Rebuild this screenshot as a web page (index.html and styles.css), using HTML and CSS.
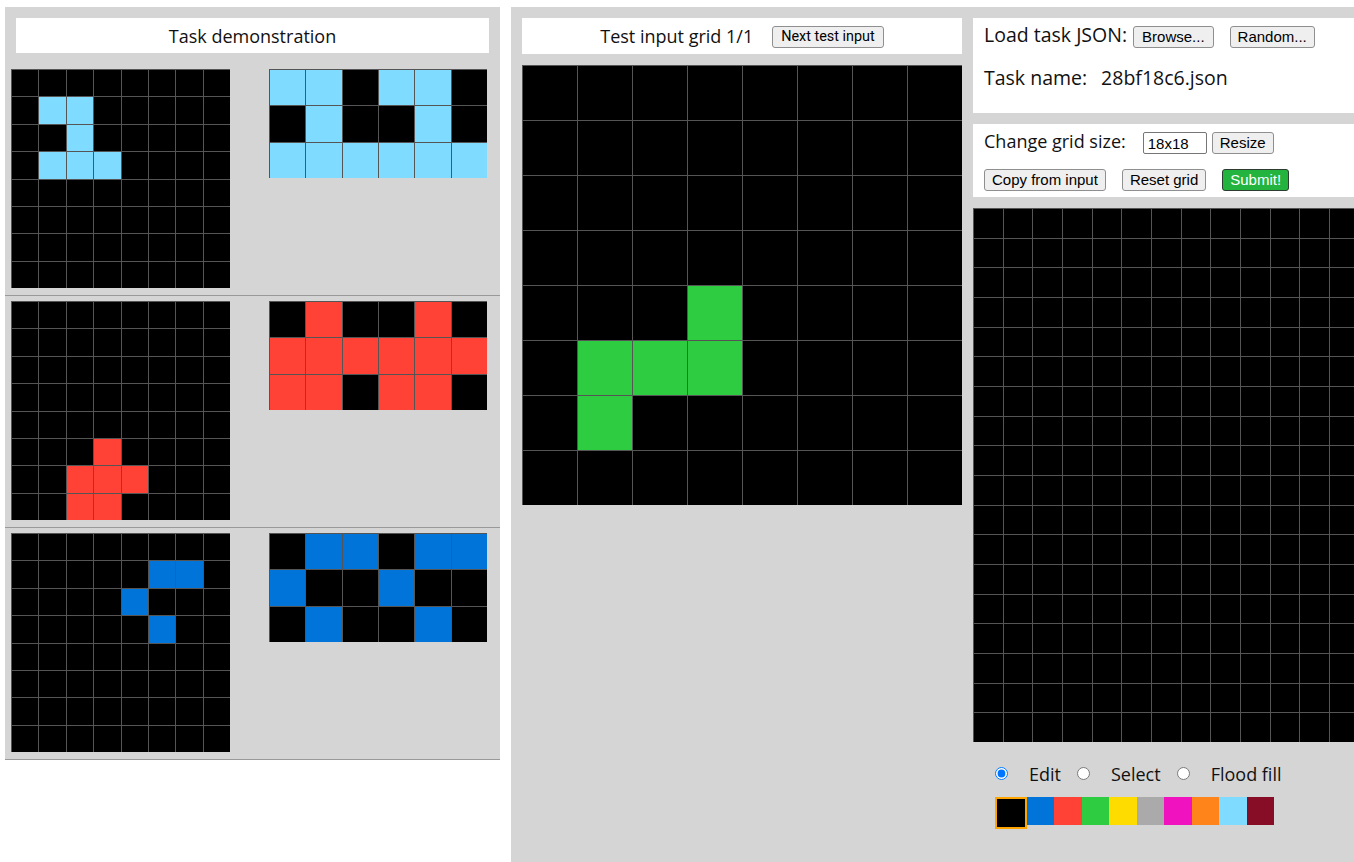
FILE: index.html
```html
<!DOCTYPE html>
<html lang="en">
<head>
<meta charset="utf-8">
<title>ARC testing interface</title>
<link rel="stylesheet" href="styles.css">
</head>
<body>
<div class="workspace">
  <section class="demo-panel">
    <div class="title-box demo-title">Task demonstration</div>
    <div class="pair">
      <div class="grid grid-in" data-grid="d1in" data-size="219"></div>
      <div class="grid grid-out" data-grid="d1out" data-size="218"></div>
    </div>
    <div class="pair">
      <div class="grid grid-in" data-grid="d2in" data-size="219"></div>
      <div class="grid grid-out" data-grid="d2out" data-size="218"></div>
    </div>
    <div class="pair">
      <div class="grid grid-in" data-grid="d3in" data-size="219"></div>
      <div class="grid grid-out" data-grid="d3out" data-size="218"></div>
    </div>
  </section>

  <section class="work-panel">
    <div class="test-col">
      <div class="title-box test-title"><span>Test input grid 1/1</span><button class="btn btn-next">Next test input</button></div>
      <div class="grid" data-grid="test" data-size="440"></div>
    </div>

    <div class="editor-col">
      <div class="box box-load">
        <div class="row">
          <span class="label label-big">Load task JSON:</span>
          <button class="btn btn-browse">Browse...</button>
          <button class="btn btn-random">Random...</button>
        </div>
        <div class="row row-name">
          <span class="label label-big">Task name:</span>
          <span class="label label-big task-name">28bf18c6.json</span>
        </div>
      </div>

      <div class="box box-resize">
        <div class="row">
          <span class="label label-small">Change grid size:</span>
          <input class="size-input" type="text" value="18x18">
          <button class="btn btn-resize">Resize</button>
        </div>
        <div class="row row-actions">
          <button class="btn">Copy from input</button>
          <button class="btn btn-gap">Reset grid</button>
          <button class="btn btn-gap btn-submit">Submit!</button>
        </div>
      </div>

      <div class="grid" data-grid="out" data-size="534"></div>

      <div class="toolbar">
        <div class="tools">
          <input type="radio" id="tool_edit" name="tool" class="radio" checked>
          <label for="tool_edit" class="tool-label">Edit</label>
          <input type="radio" id="tool_select" name="tool" class="radio radio-next">
          <label for="tool_select" class="tool-label">Select</label>
          <input type="radio" id="tool_fill" name="tool" class="radio radio-next">
          <label for="tool_fill" class="tool-label">Flood fill</label>
        </div>
        <div class="palette">
          <div class="swatch c0 selected"></div>
          <div class="swatch c1"></div>
          <div class="swatch c2"></div>
          <div class="swatch c3"></div>
          <div class="swatch c4"></div>
          <div class="swatch c5"></div>
          <div class="swatch c6"></div>
          <div class="swatch c7"></div>
          <div class="swatch c8"></div>
          <div class="swatch c9"></div>
        </div>
      </div>
    </div>
  </section>
</div>
<script src="script.js"></script>
</body>
</html>
```

FILE: styles.css
```css
html, body {
  margin: 0;
  padding: 0;
  overflow: hidden;
  background: #ffffff;
}

body {
  font-family: "Open Sans", "Noto Sans", sans-serif;
  font-size: 18px;
  color: #111111;
}

.workspace {
  display: flex;
  align-items: flex-start;
  padding: 7px 0 0 5px;
  width: max-content;
}

/* ---------- left: demonstration ---------- */
.demo-panel {
  flex-shrink: 0;
  width: 495px;
  background: #d5d5d5;
  padding-top: 11px;
}

.title-box {
  background: #ffffff;
  display: flex;
  align-items: center;
  justify-content: center;
}

.demo-title {
  height: 35px;
  margin: 0 11px 11px;
}

.pair {
  display: flex;
  align-items: flex-start;
  gap: 39px;
  padding: 5px 0 7px 6px;
  border-bottom: 1px solid #999999;
}

/* ---------- grids ---------- */
.grid {
  display: grid;
  flex-shrink: 0;
  background: #000000;
}

.cell {
  box-sizing: border-box;
  border-top: 1px solid #555555;
  border-left: 1px solid #555555;
}

.c0 { background: #000000; }
.c1 { background: #0074d9; }
.c2 { background: #ff4136; }
.c3 { background: #2ecc40; }
.c4 { background: #ffdc00; }
.c5 { background: #aaaaaa; }
.c6 { background: #f012be; }
.c7 { background: #ff851b; }
.c8 { background: #7fdbff; }
.c9 { background: #870c25; }

/* ---------- right: work area ---------- */
.work-panel {
  flex-shrink: 0;
  display: flex;
  align-items: flex-start;
  gap: 11px;
  margin-left: 11px;
  padding: 11px;
  min-height: 880px;
  box-sizing: border-box;
  background: #d5d5d5;
}

.test-col {
  width: 440px;
  flex-shrink: 0;
}

.test-title {
  height: 36px;
  margin-bottom: 11px;
}

.editor-col {
  width: 560px;
  flex-shrink: 0;
}

.box {
  background: #ffffff;
  padding: 8px 11px 0;
  margin-bottom: 11px;
}

.box-load {
  padding-bottom: 22px;
}

.box-resize {
  padding-bottom: 6px;
}

.row {
  display: flex;
  align-items: flex-start;
  height: 22px;
}

.label {
  white-space: nowrap;
}

.label-big {
  font-size: 19.5px;
  line-height: 26px;
  margin-top: -4px;
}

.label-small {
  line-height: 24px;
  margin-top: -3px;
}

.row-name {
  margin-top: 21px;
}

.task-name {
  margin-left: 14px;
}

.row-actions {
  margin-top: 15px;
}

/* ---------- buttons & inputs ---------- */
.btn {
  font-family: "Liberation Sans", Arial, sans-serif;
  font-size: 15px;
  line-height: 18px;
  color: #000000;
  background: #efefef;
  border: 1px solid #8f8f8f;
  border-radius: 3px;
  padding: 1px 7px;
  margin: 0;
  height: 22px;
  box-sizing: border-box;
  white-space: nowrap;
}

.btn-next {
  font-family: Roboto, "Liberation Sans", sans-serif;
  font-size: 14.4px;
  padding: 1px 8px;
  margin: 2px 0 0 19px;
}

.btn-browse {
  margin-left: 6px;
  padding: 1px 8px;
}

.btn-random {
  margin-left: 16px;
  padding: 1px 7px;
}

.btn-resize {
  margin-left: 5px;
}

.btn-gap {
  margin-left: 16px;
}

.btn-submit {
  background: #22b43f;
  color: #ffffff;
  border-color: #2e3b30;
}

.size-input {
  font-family: "Liberation Sans", Arial, sans-serif;
  font-size: 15px;
  width: 64px;
  height: 22px;
  box-sizing: border-box;
  margin: 0 0 0 17px;
  padding: 1px 4px;
  border: 1px solid #767676;
  border-radius: 2px;
  color: #000000;
  background: #ffffff;
}

/* ---------- toolbar ---------- */
.toolbar {
  margin-top: 20px;
  padding-left: 22px;
}

.tools {
  display: flex;
  align-items: center;
  height: 24px;
}

.radio {
  width: 13px;
  height: 13px;
  margin: 0;
}

.radio-next {
  margin-left: 16px;
}

.tool-label {
  margin-left: 21px;
}

.palette {
  display: flex;
  align-items: flex-start;
  margin-top: 11px;
}

.swatch {
  width: 27.45px;
  height: 28px;
  flex-shrink: 0;
}

.swatch.selected {
  width: 28px;
  border: 2px solid #ffa500;
}
```

FILE: script.js
```js
var GRIDS = {
  d1in: ["00000000", "08800000", "00800000", "08880000", "00000000", "00000000", "00000000", "00000000"],
  d1out: ["880880", "080080", "888888"],
  d2in: ["00000000", "00000000", "00000000", "00000000", "00000000", "00020000", "00222000", "00220000"],
  d2out: ["020020", "222222", "220220"],
  d3in: ["00000000", "00000110", "00001000", "00000100", "00000000", "00000000", "00000000", "00000000"],
  d3out: ["011011", "100100", "010010"],
  test: ["00000000", "00000000", "00000000", "00000000", "00030000", "03330000", "03000000", "00000000"],
  out: (function () {
    var rows = [];
    for (var i = 0; i < 18; i++) { rows.push("000000000000000000"); }
    return rows;
  })()
};

document.querySelectorAll(".grid").forEach(function (g) {
  var rows = GRIDS[g.dataset.grid];
  var h = rows.length;
  var w = rows[0].length;
  var size = parseFloat(g.dataset.size) / Math.max(h, w);
  g.style.gridTemplateColumns = "repeat(" + w + ", " + size + "px)";
  g.style.gridAutoRows = size + "px";
  rows.forEach(function (r) {
    for (var j = 0; j < r.length; j++) {
      var c = document.createElement("div");
      c.className = "cell c" + r[j];
      g.appendChild(c);
    }
  });
});
```
